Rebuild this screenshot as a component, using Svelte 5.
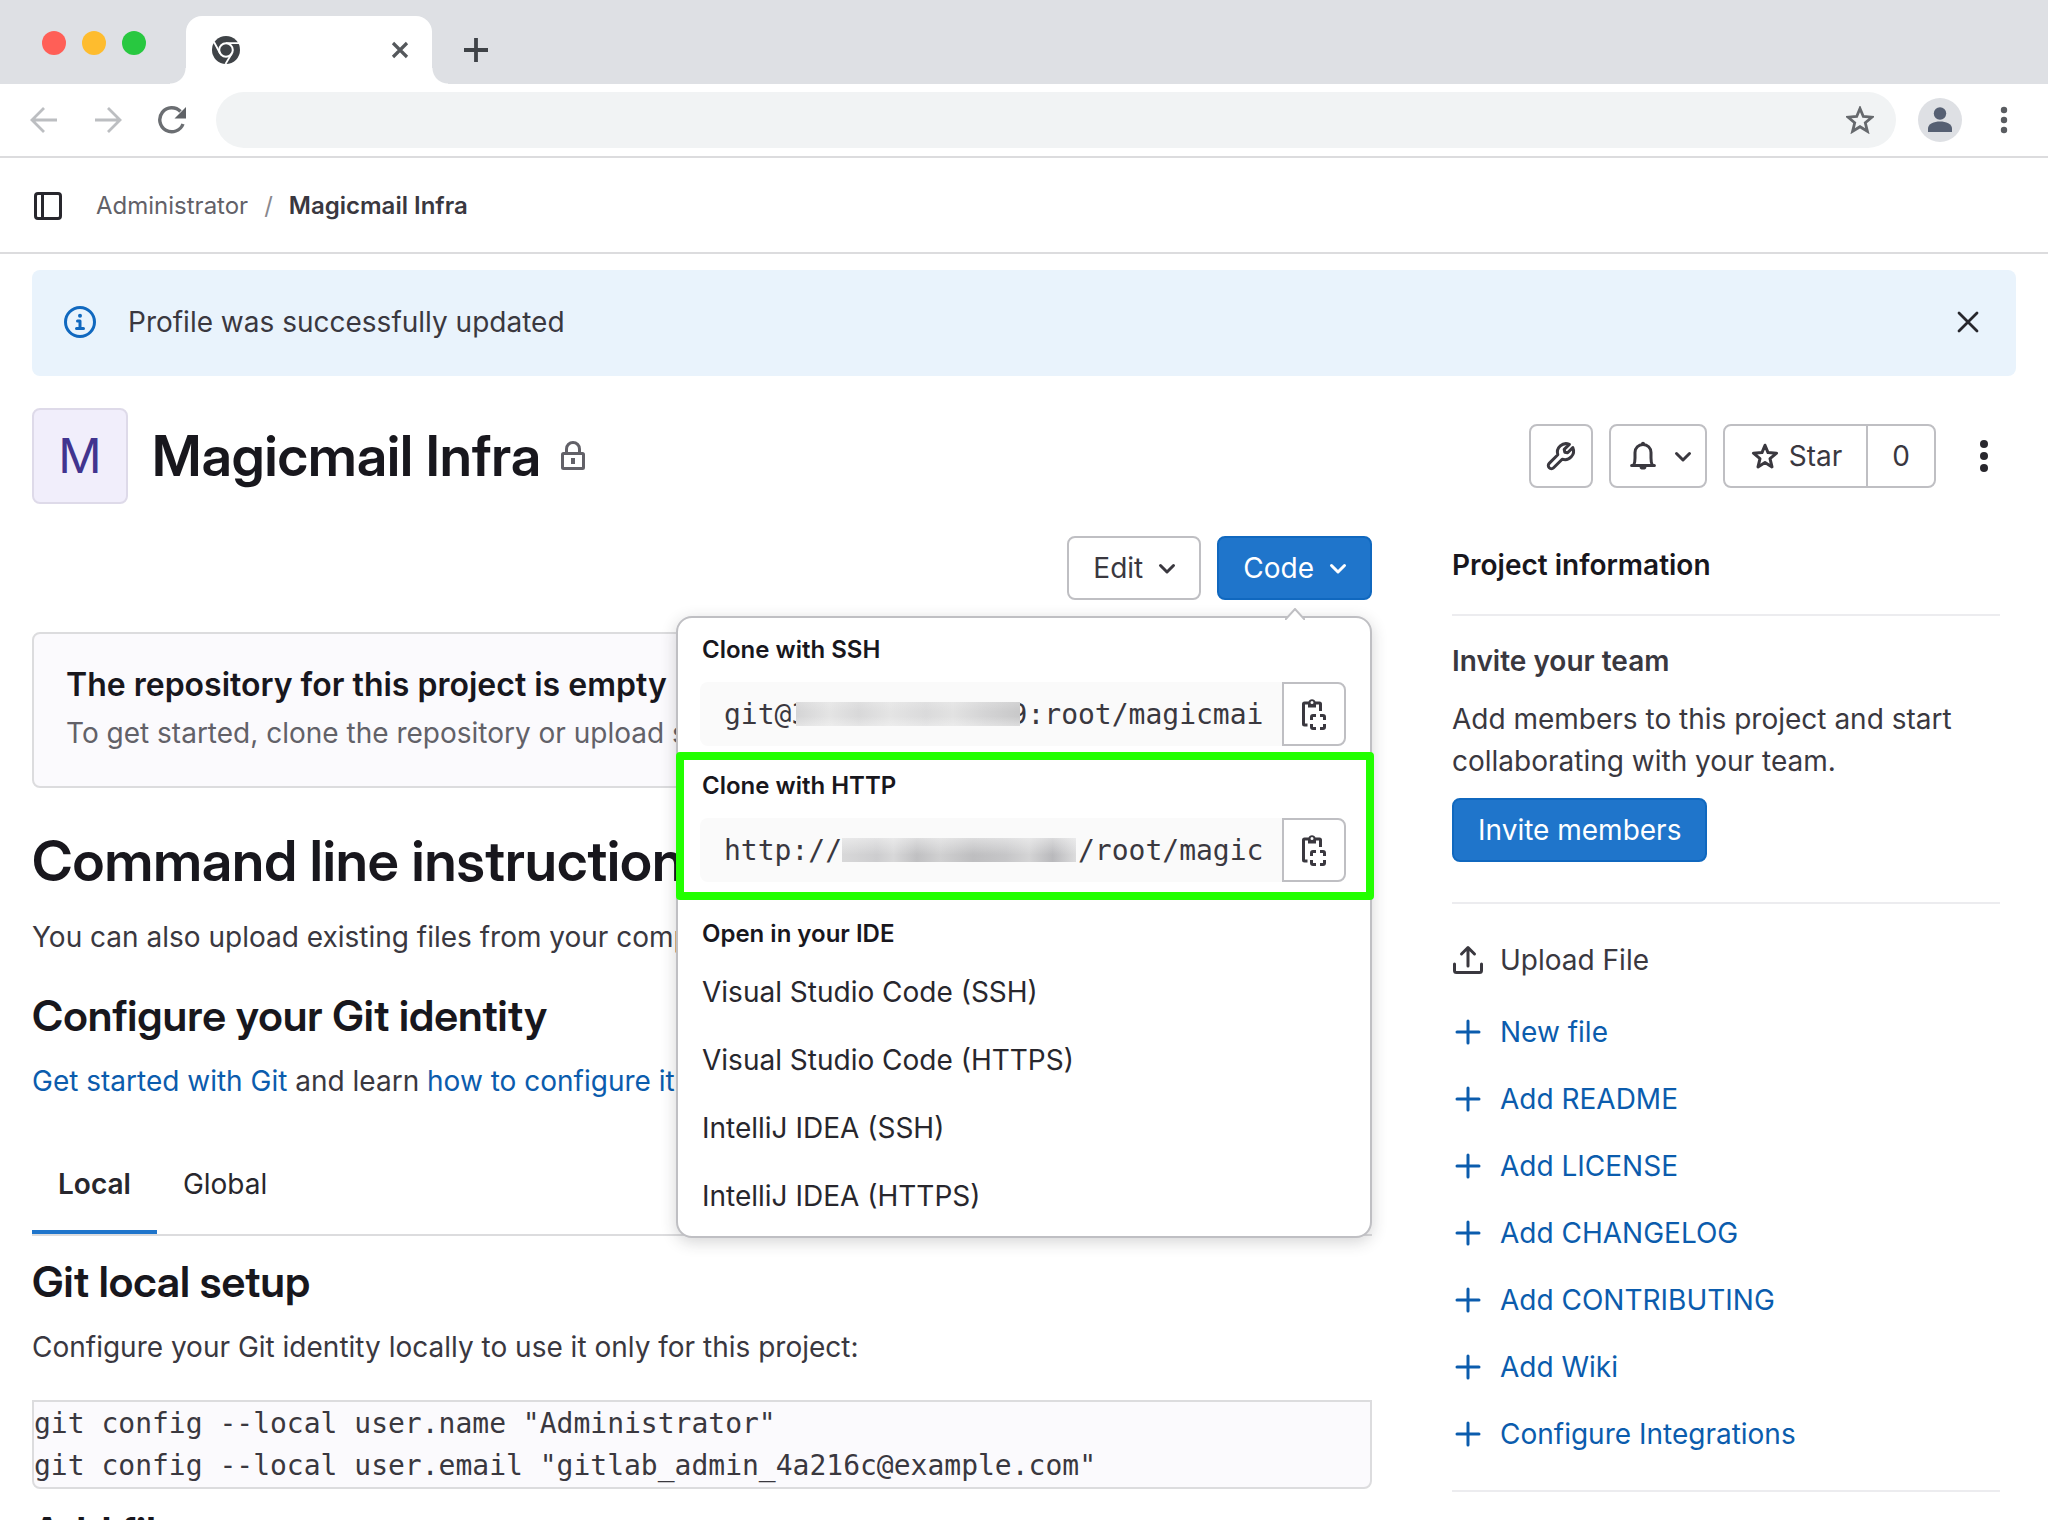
<script lang="ts">
  const ideLinks = [
    'Visual Studio Code (SSH)',
    'Visual Studio Code (HTTPS)',
    'IntelliJ IDEA (SSH)',
    'IntelliJ IDEA (HTTPS)',
  ];
  const quickLinks = [
    'New file',
    'Add README',
    'Add LICENSE',
    'Add CHANGELOG',
    'Add CONTRIBUTING',
    'Add Wiki',
    'Configure Integrations',
  ];
  const gap = ' '.repeat(12);
  const sshUrl = `git@3${gap}9:root/magicmai`;
  const httpUrl = `http://${gap}  /root/magic`;
  const gitSetup = `git config --local user.name "Administrator"
git config --local user.email "gitlab_admin_4a216c@example.com"`;
</script>

{#snippet chevron()}
  <svg class="icon" viewBox="0 0 16 16" aria-hidden="true">
    <path d="M4.75 6.75 8 10l3.25-3.25" fill="none" stroke="currentColor" stroke-width="1.5" stroke-linecap="round" stroke-linejoin="round" />
  </svg>
{/snippet}

{#snippet copyIcon()}
  <svg class="icon" viewBox="0 0 16 16" aria-hidden="true">
    <g fill="none" stroke="currentColor" stroke-width="1.5">
      <path d="M4.75 13.500H3.250c-.3 0-.5-.2-.5-.5V3c0-.3.2-.5.5-.5H5.500M8.500 2.500h2.250c.3 0 .5.200.5.500v3.500" />
      <path d="M6.750 11V9.500c0-.4.350-.75.750-.75H9M11 8.750h1.500c.4 0 .750.350.750.750V11M13.250 13v1.500c0 .4-.350.750-.750.750H11M9 15.250H7.500a.75.75 0 0 1-.75-.75V13" />
    </g>
    <path d="M5 2h.250a1.800 1.800 0 0 1 3.500 0H9v2.800H5zM7 1.500a.75.75 0 1 0 0 1.500.75.75 0 0 0 0-1.500z" fill="currentColor" fill-rule="evenodd" />
  </svg>
{/snippet}

<div class="window">
  <header class="chrome">
    <div class="tabstrip">
      <div class="lights"><span class="red"></span><span class="amber"></span><span class="green"></span></div>
      <div class="tab">
        <svg class="favicon" viewBox="0 0 28 28" aria-hidden="true">
          <circle cx="14" cy="14" r="14" fill="#3f4347" />
          <circle cx="14" cy="14" r="6.8" fill="none" stroke="#fff" stroke-width="2" />
          <path d="M14 7.200h13M8.200 17.500 2 6M19.800 17.500 13.500 28" stroke="#fff" stroke-width="1.800" />
        </svg>
        <button class="bare" aria-label="Close tab">
          <svg class="tabclose" viewBox="0 0 18 18" aria-hidden="true"><path d="m2 2 14 14M16 2 2 16" stroke="#55585c" stroke-width="3.200" /></svg>
        </button>
      </div>
      <button class="bare newtab" aria-label="New tab">
        <svg class="plus" viewBox="0 0 24 24" aria-hidden="true"><path d="M12 0v24M0 12h24" stroke="#3f4347" stroke-width="3.800" /></svg>
      </button>
    </div>
    <div class="toolbar">
      <button class="bare" aria-label="Back">
        <svg class="nav" viewBox="0 0 28 28" aria-hidden="true"><path d="M27 14H2M14 2 2 14l12 12" fill="none" stroke="#bcbec1" stroke-width="2.800" /></svg>
      </button>
      <button class="bare" aria-label="Forward">
        <svg class="nav" viewBox="0 0 28 28" aria-hidden="true"><path d="M1 14h25M14 2l12 12-12 12" fill="none" stroke="#bcbec1" stroke-width="2.800" /></svg>
      </button>
      <button class="bare reload" aria-label="Reload">
        <svg class="nav" viewBox="0 0 28 28" aria-hidden="true">
          <path d="M25 18A12 12 0 1 1 22.5 5.500" fill="none" stroke="#6b6e72" stroke-width="3.400" />
          <path d="M28 1v11.500H16.500z" fill="#5f6266" />
        </svg>
      </button>
      <div class="address">
        <input type="text" aria-label="Address" />
        <button class="bare" aria-label="Bookmark">
          <svg class="nav" viewBox="0 0 28 28" aria-hidden="true"><path d="m14 2.500 3.300 8 8.600.7-6.600 5.600 2.100 8.500-7.400-4.600-7.400 4.600 2.100-8.500-6.600-5.600 8.600-.7z" fill="none" stroke="#66696d" stroke-width="2.800" /></svg>
        </button>
      </div>
      <button class="bare" aria-label="Profile">
        <svg class="profile" viewBox="0 0 44 44" aria-hidden="true">
          <circle cx="22" cy="22" r="22" fill="#dee0e4" />
          <circle cx="22" cy="15.500" r="6.200" fill="#566073" />
          <path d="M10 34v-3.500C10 26 16 23.500 22 23.500s12 2.500 12 7V34z" fill="#566073" />
        </svg>
      </button>
      <button class="bare" aria-label="Browser menu">
        <svg class="dots" viewBox="0 0 12 28" fill="#5a5d61" aria-hidden="true"><circle cx="6" cy="4" r="3.200" /><circle cx="6" cy="14" r="3.200" /><circle cx="6" cy="24" r="3.200" /></svg>
      </button>
    </div>
  </header>

  <nav class="crumbs" aria-label="Breadcrumb">
    <button class="bare" aria-label="Toggle sidebar">
      <svg class="icon" viewBox="0 0 16 16" aria-hidden="true"><rect x="1.750" y="1.750" width="12.500" height="12.500" rx="1.250" fill="none" stroke="#28272d" stroke-width="1.500" /><path d="M5.250 2v12" stroke="#28272d" stroke-width="1.500" /></svg>
    </button>
    <ol>
      <li><a href="#admin">Administrator</a></li>
      <li class="current"><a href="#project">Magicmail Infra</a></li>
    </ol>
  </nav>

  <main>
    <div class="alert" role="status">
      <svg class="icon info" viewBox="0 0 16 16" aria-hidden="true">
        <circle cx="8" cy="8" r="7.250" fill="none" stroke="currentColor" stroke-width="1.500" />
        <circle cx="8" cy="4.900" r="1" fill="currentColor" />
        <path d="M6.750 7.500H8v3.750M6.250 11.250h3.500" fill="none" stroke="currentColor" stroke-width="1.500" stroke-linecap="round" stroke-linejoin="round" />
      </svg>
      <p>Profile was successfully updated</p>
      <button class="bare" aria-label="Dismiss">
        <svg class="icon" viewBox="0 0 16 16" aria-hidden="true"><path d="m3.500 3.500 9 9M12.500 3.500l-9 9" stroke="#28272d" stroke-width="1.400" stroke-linecap="round" /></svg>
      </button>
    </div>

    <div class="project">
      <div class="avatar">M</div>
      <h1>Magicmail Infra</h1>
      <svg class="icon lock" viewBox="0 0 16 16" aria-hidden="true">
        <g fill="none" stroke="#626168" stroke-width="1.500"><rect x="2.750" y="6.750" width="10.500" height="7.500" rx=".5" /><path d="M4.750 6.500V4.500a3.250 3.250 0 0 1 6.500 0v2" /></g>
        <rect x="7" y="9" width="2" height="3" fill="#626168" />
      </svg>
      <div class="actions">
        <button class="btn square" aria-label="Project settings">
          <svg class="icon" viewBox="0 0 16 16" aria-hidden="true"><path d="M12.200 2.200A4.300 4.300 0 0 0 6.400 7.400L2.100 11.700a1.500 1.500 0 0 0 2.200 2.200L8.600 9.600A4.300 4.300 0 0 0 13.900 3.800L11.300 6.400 9.900 6.100 9.600 4.700z" fill="none" stroke="currentColor" stroke-width="1.500" stroke-linejoin="round" /></svg>
        </button>
        <button class="btn bell" aria-label="Notifications">
          <svg class="icon" viewBox="0 0 16 16" aria-hidden="true">
            <path d="M2.300 12.750h11.400M3.400 12.500c.5-1 .6-2.200.6-3.500V6.200a4 4 0 0 1 8 0V9c0 1.300.1 2.500.6 3.500" fill="none" stroke="currentColor" stroke-width="1.500" stroke-linecap="round" stroke-linejoin="round" />
            <path d="M7 2V1.900a1 1 0 0 1 2 0V2zM6.300 13.500h3.400a1.700 1.300 0 0 1-3.400 0z" fill="currentColor" />
          </svg>
          {@render chevron()}
        </button>
        <div class="group">
          <button class="btn">
            <svg class="icon" viewBox="0 0 16 16" aria-hidden="true"><path d="m8 2.600 1.500 3.700 4.300.3-3.300 2.700 1 4.150L8 11.200l-3.500 2.250L5.500 9.300 2.200 6.600l4.300-.3z" fill="none" stroke="currentColor" stroke-width="1.500" stroke-linejoin="round" /></svg>
            Star
          </button>
          <a class="btn count" href="#starrers">0</a>
        </div>
        <button class="bare more" aria-label="More actions">
          <svg class="icon" viewBox="0 0 16 16" fill="#28272d" aria-hidden="true"><circle cx="8" cy="2" r="2" /><circle cx="8" cy="8" r="2" /><circle cx="8" cy="14" r="2" /></svg>
        </button>
      </div>
    </div>

    <div class="columns">
      <section class="content">
        <div class="tools">
          <button class="btn">Edit {@render chevron()}</button>
          <div class="code">
            <button class="btn primary" aria-expanded="true">Code {@render chevron()}</button>
            <div class="menu">
              <svg class="tip" viewBox="0 0 20 12" aria-hidden="true"><path d="M0 12 10 1l10 11" fill="#fff" stroke="#bfbfc3" stroke-width="2" /></svg>
              <div class="clone">
                <label for="ssh">Clone with SSH</label>
                <div class="field">
                  <input id="ssh" type="text" readonly value={sshUrl} />
                  <span class="mask ssh"></span>
                  <button class="btn copy" aria-label="Copy SSH URL">{@render copyIcon()}</button>
                </div>
              </div>
              <div class="clone marked">
                <label for="http">Clone with HTTP</label>
                <div class="field">
                  <input id="http" type="text" readonly value={httpUrl} />
                  <span class="mask http"></span>
                  <button class="btn copy" aria-label="Copy HTTP URL">{@render copyIcon()}</button>
                </div>
              </div>
              <div class="ide">
                <h5>Open in your IDE</h5>
                {#each ideLinks as name}
                  <a href="#ide">{name}</a>
                {/each}
              </div>
            </div>
          </div>
        </div>

        <div class="empty">
          <h4>The repository for this project is empty</h4>
          <p>To get started, clone the repository or upload some files.</p>
        </div>

        <h2>Command line instructions</h2>
        <p>You can also upload existing files from your computer.</p>
        <h3>Configure your Git identity</h3>
        <p><a href="#git">Get started with Git</a> and learn <a href="#configure">how to configure it</a>.</p>
        <div class="tabs" role="tablist">
          <button class="bare selected" role="tab" aria-selected="true">Local</button>
          <button class="bare" role="tab" aria-selected="false">Global</button>
        </div>
        <h3>Git local setup</h3>
        <p>Configure your Git identity locally to use it only for this project:</p>
        <pre>{gitSetup}</pre>
        <h3>Add files</h3>
      </section>

      <aside>
        <h4>Project information</h4>
        <div class="invite">
          <h4>Invite your team</h4>
          <p>Add members to this project and start collaborating with your team.</p>
          <button class="btn primary">Invite members</button>
        </div>
        <ul>
          <li class="upload">
            <svg class="icon" viewBox="0 0 16 16" aria-hidden="true"><path d="M8 11V2M4.750 5 8 1.750 11.250 5M1.250 10v3.250c0 .6.4 1 1 1h11.500c.6 0 1-.4 1-1V10" fill="none" stroke="currentColor" stroke-width="1.500" stroke-linecap="round" stroke-linejoin="round" /></svg>
            Upload File
          </li>
          {#each quickLinks as name}
            <li>
              <a href="#new">
                <svg class="icon" viewBox="0 0 16 16" aria-hidden="true"><path d="M8 2.500v11M2.500 8h11" stroke="currentColor" stroke-width="1.500" stroke-linecap="round" /></svg>
                {name}
              </a>
            </li>
          {/each}
        </ul>
      </aside>
    </div>
  </main>
</div>

<style>
  :global(body) {
    margin: 0;
    background: #fff;
  }
  .window,
  .window :global(*) {
    box-sizing: border-box;
  }
  .window {
    height: 100vh;
    display: flex;
    flex-direction: column;
    overflow: hidden;
    font: 28px/42px Inter, 'Liberation Sans', sans-serif;
    color: #3a383f;
  }
  button,
  input {
    font: inherit;
    color: inherit;
  }
  h1, h2, h3, h4, h5, p, ul, ol, pre {
    margin: 0;
    padding: 0;
  }
  h1, h2, h3, h4, h5 {
    font-weight: 600;
    color: #18171d;
  }
  h1, h2, h3 {
    font-family: 'Inter Display', Inter, 'Liberation Sans', sans-serif;
    font-variation-settings: 'opsz' 32;
  }
  ul, ol {
    list-style: none;
  }
  a {
    color: #0b5cad;
    text-decoration: none;
  }
  svg {
    display: block;
    flex: none;
  }
  .icon {
    width: 32px;
    height: 32px;
  }
  .bare {
    display: flex;
    padding: 0;
    border: 0;
    background: none;
  }

  /* Browser frame */
  .chrome {
    flex: none;
    border-bottom: 2px solid #dcdcde;
  }
  .tabstrip {
    display: flex;
    align-items: flex-end;
    height: 84px;
    padding-left: 42px;
    background: #dee0e4;
  }
  .lights {
    display: flex;
    gap: 16px;
    margin-right: 40px;
    padding-bottom: 29px;
  }
  .lights span {
    width: 24px;
    height: 24px;
    border-radius: 50%;
  }
  .red { background: #ff5f57; }
  .amber { background: #febc2e; }
  .green { background: #28c840; }
  .tab {
    position: relative;
    display: flex;
    align-items: center;
    justify-content: space-between;
    width: 246px;
    height: 68px;
    padding: 0 23px 0 26px;
    border-radius: 16px 16px 0 0;
    background: #fff;
  }
  .tab::before,
  .tab::after {
    content: '';
    position: absolute;
    bottom: 0;
    width: 16px;
    height: 16px;
  }
  .tab::before {
    right: 100%;
    background: radial-gradient(circle at 0 0, transparent 15px, #fff 16px);
  }
  .tab::after {
    left: 100%;
    background: radial-gradient(circle at 100% 0, transparent 15px, #fff 16px);
  }
  .favicon {
    width: 28px;
    height: 28px;
  }
  .tabclose {
    width: 18px;
    height: 18px;
  }
  .newtab {
    padding: 0 32px 22px;
  }
  .plus {
    width: 24px;
    height: 24px;
  }
  .toolbar {
    display: flex;
    align-items: center;
    gap: 36px;
    height: 72px;
    padding: 0 38px 0 30px;
  }
  .nav {
    width: 28px;
    height: 28px;
  }
  .reload {
    margin-right: -6px;
  }
  .address {
    flex: 1;
    display: flex;
    align-items: center;
    height: 56px;
    margin-right: -14px;
    padding: 0 22px 0 28px;
    border-radius: 28px;
    background: #f1f3f4;
  }
  .address input {
    flex: 1;
    border: 0;
    outline: 0;
    background: none;
  }
  .profile {
    width: 44px;
    height: 44px;
  }
  .dots {
    width: 12px;
    height: 28px;
  }

  /* Breadcrumb bar */
  .crumbs {
    flex: none;
    display: flex;
    align-items: center;
    gap: 32px;
    height: 96px;
    padding: 2px 32px 0;
    border-bottom: 2px solid #dcdcde;
    font-size: 24px;
  }
  .crumbs ol {
    display: flex;
  }
  .crumbs li + li::before {
    content: '/';
    padding: 0 16px;
    color: #89888d;
    font-weight: 400;
  }
  .crumbs a {
    color: #626168;
  }
  .crumbs .current a {
    color: #3a383f;
    font-weight: 600;
  }

  main {
    flex: 1;
    min-height: 0;
    overflow: hidden;
    padding: 16px 32px 0;
  }
  .alert {
    display: flex;
    align-items: center;
    gap: 32px;
    padding: 31px 32px 33px;
    border-radius: 8px;
    background: #e9f3fc;
  }
  .alert p {
    flex: 1;
  }
  .info {
    color: #1068bf;
  }

  /* Project heading */
  .project {
    display: flex;
    align-items: center;
    margin-top: 32px;
  }
  .avatar {
    display: grid;
    place-items: center;
    width: 96px;
    height: 96px;
    margin-right: 24px;
    border: 2px solid #dedae9;
    border-radius: 8px;
    background: #f1eefb;
    color: #41348f;
    font-size: 48px;
  }
  h1,
  h2 {
    font-size: 56px;
    line-height: 70px;
  }
  .lock {
    margin-left: 16px;
  }
  .actions {
    display: flex;
    gap: 16px;
    margin-left: auto;
  }
  .btn {
    display: flex;
    align-items: center;
    justify-content: center;
    gap: 8px;
    height: 64px;
    padding: 0 24px;
    border: 2px solid #bfbfc3;
    border-radius: 8px;
    background: #fff;
    color: #3a383f;
  }
  .btn.square {
    width: 64px;
    padding: 0;
  }
  .bell {
    padding: 0 6px 0 16px;
  }
  .group {
    display: flex;
  }
  .group .btn:first-child {
    border-radius: 8px 0 0 8px;
  }
  .group .count {
    margin-left: -2px;
    border-radius: 0 8px 8px 0;
  }
  .more {
    align-items: center;
    padding: 0 16px;
  }
  .btn.primary {
    border-color: #1068bf;
    background: #1f75cb;
    color: #fff;
  }

  .columns {
    display: flex;
    gap: 80px;
    margin-top: 32px;
  }
  .content {
    flex: 1;
    min-width: 0;
  }
  .tools {
    display: flex;
    justify-content: flex-end;
    gap: 16px;
  }
  .tools .btn {
    padding-right: 16px;
  }

  /* Clone menu, laid over the page under its button */
  .code {
    position: relative;
  }
  .menu {
    position: absolute;
    top: 80px;
    right: 0;
    z-index: 1;
    width: 696px;
    border: 2px solid #bfbfc3;
    border-radius: 16px;
    background: #fff;
    box-shadow: 0 4px 16px rgba(40, 39, 45, 0.2);
  }
  .tip {
    position: absolute;
    right: 65px;
    bottom: 100%;
    width: 20px;
    height: 12px;
    margin-bottom: -2px;
  }
  .clone {
    padding: 11px 24px 8px 22px;
  }
  .clone label,
  h5 {
    display: block;
    padding-left: 2px;
    color: #18171d;
    font-size: 24px;
    font-weight: 600;
  }
  .clone label {
    margin-bottom: 11px;
  }
  .field {
    position: relative;
    display: flex;
  }
  .field input {
    flex: 1;
    min-width: 0;
    height: 64px;
    padding: 0 16px 0 24px;
    border: 0;
    border-radius: 8px 0 0 8px;
    background: #fafafa;
  }
  .field input,
  pre {
    font-family: 'DejaVu Sans Mono', monospace;
  }
  .btn.copy {
    width: 64px;
    padding: 0;
    border-radius: 0 8px 8px 0;
  }
  .mask {
    position: absolute;
    top: 20px;
    height: 24px;
  }
  .mask.ssh {
    left: 96px;
    width: 224px;
    background:
      linear-gradient(rgba(250, 250, 250, 0.2), transparent 40%, transparent 60%, rgba(250, 250, 250, 0.4)),
      linear-gradient(90deg, #d4d4d5, #e4e4e4 15%, #d8d8d9 28%, #e4e4e4 42%, #dadadb 58%, #e2e2e2 70%, #d4d4d5 84%, #c8c8c9);
  }
  .mask.http {
    left: 142px;
    width: 234px;
    background:
      linear-gradient(rgba(250, 250, 250, 0.5), transparent 70%),
      linear-gradient(90deg, #d8d8d9, #cdcdcf 15%, #d8d8d9 22%, #c0c0c2 32%, #d0d0d1 42%, #bebec0 56%, #c6c6c8 70%, #d4d4d5 80%, #b9b9bc 90%, #dcdcdd);
  }
  .marked {
    margin: -2px -4px 0 -2px;
    padding: 5px 20px 10px 16px;
    border: 8px solid #22ff00;
    border-radius: 4px;
  }
  .ide {
    padding: 13px 22px 6px;
  }
  .ide a {
    display: block;
    padding: 13px 2px;
    color: #28272d;
  }
  h5 {
    margin-bottom: 3px;
  }

  .empty {
    margin-top: 32px;
    padding: 27px 32px 32px;
    border: 2px solid #dcdcde;
    border-radius: 8px;
    background: #fbfafd;
    color: #626168;
  }
  .empty h4 {
    margin-bottom: 3px;
    font-size: 32px;
    line-height: 48px;
  }
  h2 {
    margin: 38px 0 20px;
  }
  h3 {
    margin: 32px 0 20px;
    font-size: 43px;
    line-height: 50px;
  }
  .tabs {
    display: flex;
    margin-top: 32px;
    border-bottom: 2px solid #dcdcde;
  }
  .tabs button {
    padding: 29px 26px;
    color: #28272d;
  }
  .tabs .selected {
    box-shadow: inset 0 -4px #1f75cb;
    font-weight: 600;
  }
  .tabs + h3 {
    margin-top: 20px;
  }
  pre {
    margin-top: 32px;
    padding-top: 1px;
    border: 2px solid #dcdcde;
    border-radius: 0 0 8px 8px;
    background: #fbfafd;
  }
  pre + h3 {
    margin-top: 18px;
  }

  /* Project information */
  aside {
    width: 548px;
    margin-right: 16px;
    padding-top: 8px;
  }
  aside > h4 {
    padding-bottom: 28px;
    border-bottom: 2px solid #ececef;
  }
  aside h4 {
    font-size: 28px;
  }
  .invite {
    padding: 24px 0 40px;
    border-bottom: 2px solid #ececef;
  }
  .invite h4 {
    margin-bottom: 16px;
    color: #3a383f;
  }
  .invite .btn {
    margin-top: 16px;
  }
  aside ul {
    padding: 35px 0;
    border-bottom: 2px solid #ececef;
  }
  aside li,
  aside li a {
    display: flex;
    align-items: center;
    gap: 16px;
  }
  aside li + li {
    margin-top: 25px;
  }
  aside .upload {
    margin-bottom: 30px;
  }
</style>
